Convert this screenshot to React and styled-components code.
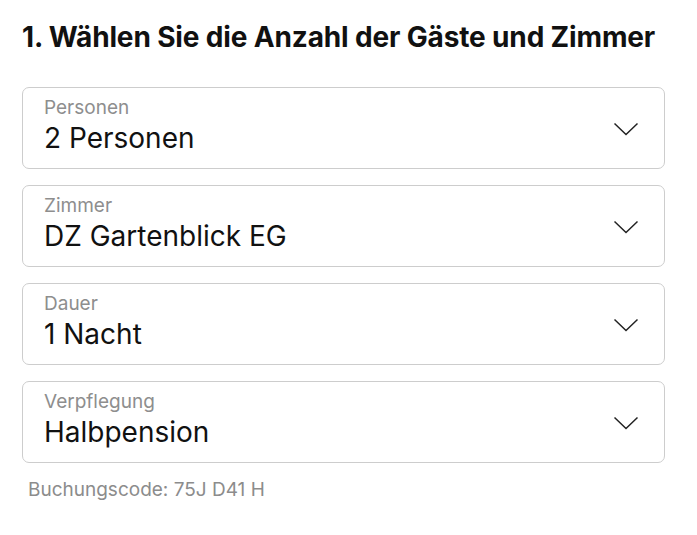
import React from "react";
import styled, { createGlobalStyle } from "styled-components";

const GlobalStyle = createGlobalStyle`
  body {
    margin: 0;
    background: #ffffff;
    font-family: Inter, "Noto Sans", sans-serif;
    color: #111111;
  }
`;

const Page = styled.div`
  padding: 20px 32px 0 22px;
`;

const Title = styled.h1`
  margin: 0 0 33px 0;
  font-size: 28px;
  font-weight: 700;
  letter-spacing: -0.15px;
  line-height: 34px;
`;

const List = styled.div`
  display: flex;
  flex-direction: column;
  gap: 16px;
`;

const SelectBox = styled.div`
  display: flex;
  align-items: flex-start;
  height: 82px;
  box-sizing: border-box;
  border: 1.5px solid #cdcdcd;
  border-radius: 7px;
  padding: 8.5px 25px 0 21px;
`;

const Texts = styled.div`
  flex: 1;
  display: flex;
  flex-direction: column;
`;

const Label = styled.span`
  font-size: 19px;
  color: #8e8e8e;
  line-height: 22px;
`;

const Value = styled.span`
  margin-top: 3px;
  font-size: 28px;
  line-height: 32px;
  color: #111111;
`;

const Arrow = styled.svg`
  margin-top: 25px;
  flex-shrink: 0;
`;

const Code = styled.div`
  margin-top: 16px;
  padding-left: 6px;
  font-size: 19px;
  line-height: 22px;
  color: #8c8c8c;
`;

const Chevron = () => (
  <Arrow width="26" height="14" viewBox="0 0 26 14" fill="none">
    <path d="M1.5 1.5 L13 12.5 L24.5 1.5" stroke="#222" strokeWidth="1.5" />
  </Arrow>
);

const fields = [
  { label: "Personen", value: "2 Personen" },
  { label: "Zimmer", value: "DZ Gartenblick EG" },
  { label: "Dauer", value: "1 Nacht" },
  { label: "Verpflegung", value: "Halbpension" },
];

export default function App() {
  return (
    <>
      <GlobalStyle />
      <Page>
        <Title>1. Wählen Sie die Anzahl der Gäste und Zimmer</Title>
        <List>
          {fields.map((f) => (
            <SelectBox key={f.label}>
              <Texts>
                <Label>{f.label}</Label>
                <Value>{f.value}</Value>
              </Texts>
              <Chevron />
            </SelectBox>
          ))}
        </List>
        <Code>Buchungscode: 75J D41 H</Code>
      </Page>
    </>
  );
}
